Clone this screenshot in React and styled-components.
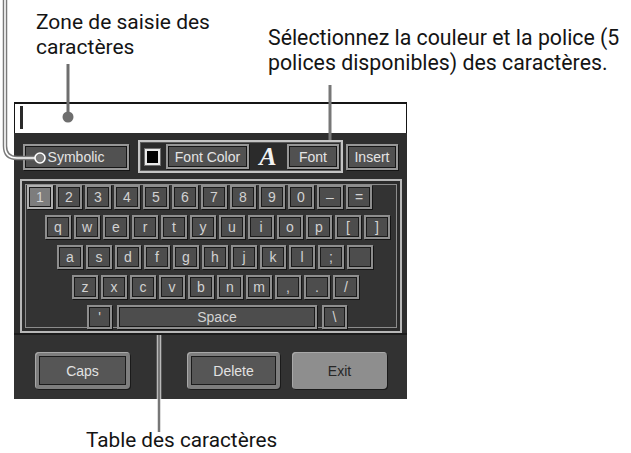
import React from 'react';
import styled, { createGlobalStyle } from 'styled-components';

const GlobalStyle = createGlobalStyle`
  html, body {
    margin: 0;
    padding: 0;
    background: #fff;
  }
  body {
    font-family: Roboto, "Open Sans", sans-serif;
  }
`;

const Page = styled.div`
  position: relative;
  width: 631px;
  height: 453px;
  overflow: hidden;
  background: #fff;
`;

const Header = styled.div`
  display: flex;
  height: 102px;
  padding-left: 36px;
  box-sizing: border-box;
`;

const Caption = styled.div`
  font-family: Roboto, "Open Sans", sans-serif;
  font-size: ${p => p.$size || 21}px;
  color: #141414;
  white-space: nowrap;
  width: ${p => (p.$width ? `${p.$width}px` : 'auto')};
  margin-top: ${p => p.$top || 0}px;
  margin-left: ${p => p.$left || 0}px;
  display: flex;
  flex-direction: column;
`;

const CaptionLine = styled.span`
  display: block;
  height: 25px;
  line-height: 25px;
`;

const Device = styled.div`
  margin-left: 14px;
  width: 393px;
  display: flex;
  flex-direction: column;
`;

const InputField = styled.div`
  height: 31px;
  box-sizing: border-box;
  background: #fff;
  border: 1px solid #151515;
  border-top-width: 2px;
  border-bottom: none;
  padding: 2px 0 0 5px;
`;

const Cursor = styled.div`
  width: 3px;
  height: 23px;
  background: #2a2a2a;
`;

const Panel = styled.div`
  background: #2e2e2e;
  display: flex;
  flex-direction: column;
`;

const Toolbar = styled.div`
  display: flex;
  align-items: center;
  height: 33px;
  margin-top: 7px;
  padding: 0 9px;
`;

const ToolButton = styled.div`
  width: ${p => p.$w}px;
  height: ${p => p.$h || 26}px;
  box-sizing: border-box;
  display: flex;
  align-items: center;
  justify-content: center;
  background: #515151;
  border: 2px solid #979797;
  box-shadow: inset 0 0 0 1px #161616, 1px 1px 0 #151515;
  color: #e4e4e4;
  font-family: "Liberation Sans", Arial, sans-serif;
  font-size: 14px;
  margin-left: ${p => p.$ml || 0}px;
`;

const FontGroup = styled.div`
  width: 205px;
  height: 33px;
  box-sizing: border-box;
  margin-left: 9px;
  display: flex;
  align-items: center;
  gap: 6px;
  padding-left: 5px;
  border: 2px solid #c4c4c4;
  box-shadow: inset 0 0 0 1px #5a5a5a;
  background: #2b2b2b;
`;

const ColorSwatch = styled.div`
  width: 15px;
  height: 16px;
  box-sizing: border-box;
  background: #000;
  border: 2px solid #e8e8e8;
  box-shadow: 0 0 0 1px #707070;
`;

const FontGlyph = styled.span`
  width: 26px;
  text-align: center;
  font-family: "Liberation Serif", "Times New Roman", serif;
  font-style: italic;
  font-weight: bold;
  font-size: 26px;
  line-height: 26px;
  color: #f2f2f2;
`;

const KeyFrame = styled.div`
  margin: 6px 5px 0 6px;
  height: 154px;
  box-sizing: border-box;
  border: 2px solid #b8b8b8;
  box-shadow: inset 0 0 0 3px #2b2b2b, inset 0 0 0 4px #8c8c8c;
  background: #333;
  padding-top: 4px;
  display: flex;
  flex-direction: column;
  gap: 6px;
`;

const KeyRow = styled.div`
  display: flex;
  height: 24px;
  gap: ${p => p.$gap || 3}px;
  padding-left: ${p => p.$indent}px;
`;

const Key = styled.div`
  width: ${p => p.$w || 26}px;
  height: 24px;
  box-sizing: border-box;
  display: flex;
  align-items: center;
  justify-content: center;
  background: ${p => (p.$active ? '#7d7d7d' : '#4d4d4d')};
  border: 2px solid ${p => (p.$active ? '#b0b0b0' : '#8e8e8e')};
  box-shadow: inset 0 0 0 1px #1a1a1a, 1px 1px 0 #141414;
  color: #d2d2d2;
  font-family: "Liberation Sans", Arial, sans-serif;
  font-size: 14px;
  line-height: 1;
`;

const BottomBar = styled.div`
  display: flex;
  border-top: 2px solid #1c1c1c;
  background: #323232;
  padding: 17px 20px 10px 21px;
`;

const BigButton = styled.div`
  width: ${p => p.$w}px;
  height: 37px;
  box-sizing: border-box;
  margin-left: ${p => p.$ml || 0}px;
  border-radius: 4px;
  padding: ${p => (p.$light ? 0 : 4)}px;
  background: ${p => (p.$light ? '#8e8e8e' : '#7e7e7e')};
  box-shadow: inset 1px 1px 0 #a8a8a8, 1px 1px 0 #1a1a1a;
  display: flex;
`;

const BigButtonFace = styled.div`
  flex: 1;
  display: flex;
  align-items: center;
  justify-content: center;
  background: ${p => (p.$light ? 'transparent' : '#565656')};
  border: ${p => (p.$light ? 'none' : '1px solid #1b1b1b')};
  color: ${p => (p.$light ? '#262626' : '#e2e2e2')};
  font-family: "Liberation Sans", Arial, sans-serif;
  font-size: 14px;
`;

const Leaders = styled.svg`
  position: absolute;
  left: 0;
  top: 0;
  pointer-events: none;
`;

const rows = [
  { indent: 5, keys: ['1', '2', '3', '4', '5', '6', '7', '8', '9', '0', '–', '='] },
  { indent: 23, keys: ['q', 'w', 'e', 'r', 't', 'y', 'u', 'i', 'o', 'p', '[', ']'] },
  { indent: 35, keys: ['a', 's', 'd', 'f', 'g', 'h', 'j', 'k', 'l', ';', ''] },
  { indent: 50, keys: ['z', 'x', 'c', 'v', 'b', 'n', 'm', ',', '.', '/'] },
];

const App = () => {
  return (
    <Page>
      <GlobalStyle />
      <Header>
        <Caption $width={232} $top={10.3}>
          <CaptionLine>Zone de saisie des</CaptionLine>
          <CaptionLine>caractères</CaptionLine>
        </Caption>
        <Caption $top={25.2} $size={21.3}>
          <CaptionLine>Sélectionnez la couleur et la police (5</CaptionLine>
          <CaptionLine>polices disponibles) des caractères.</CaptionLine>
        </Caption>
      </Header>

      <Device>
        <InputField>
          <Cursor />
        </InputField>
        <Panel>
          <Toolbar>
            <ToolButton $w={106}>Symbolic</ToolButton>
            <FontGroup>
              <ColorSwatch />
              <ToolButton $w={83} $h={25}>Font Color</ToolButton>
              <FontGlyph>A</FontGlyph>
              <ToolButton $w={52} $h={25}>Font</ToolButton>
            </FontGroup>
            <ToolButton $w={52} $ml={3}>Insert</ToolButton>
          </Toolbar>

          <KeyFrame>
            {rows.map((row, i) => (
              <KeyRow key={i} $indent={row.indent}>
                {row.keys.map((k, j) => (
                  <Key key={j} $active={i === 0 && j === 0}>{k}</Key>
                ))}
              </KeyRow>
            ))}
            <KeyRow $indent={65} $gap={5}>
              <Key $w={25}>'</Key>
              <Key $w={200}>Space</Key>
              <Key $w={25}>\</Key>
            </KeyRow>
          </KeyFrame>

          <BottomBar>
            <BigButton $w={95}><BigButtonFace>Caps</BigButtonFace></BigButton>
            <BigButton $w={93} $ml={57}><BigButtonFace>Delete</BigButtonFace></BigButton>
            <BigButton $w={95} $ml={12} $light><BigButtonFace $light>Exit</BigButtonFace></BigButton>
          </BottomBar>
        </Panel>
      </Device>

      <Caption $top={29.4} $left={86} $size={20.76}>
        <CaptionLine>Table des caractères</CaptionLine>
      </Caption>

      <Leaders width="631" height="453" viewBox="0 0 631 453">
        <path d="M5 0 V146 Q5 158 17 158 H35" fill="none" stroke="#7a7a7a" strokeWidth="4.5" />
        <path d="M5 0 V146 Q5 158 17 158 H35" fill="none" stroke="#ffffff" strokeWidth="1.6" />
        <circle cx="40" cy="158" r="5" fill="#7a7a7a" stroke="#ffffff" strokeWidth="1.6" />
        <line x1="68" y1="64" x2="68" y2="117" stroke="#6e6e6e" strokeWidth="3" />
        <circle cx="68" cy="117" r="5.5" fill="#6e6e6e" />
        <line x1="330" y1="85" x2="330" y2="140" stroke="#777" strokeWidth="3" />
        <line x1="159" y1="335" x2="159" y2="399" stroke="#d0d0d0" strokeWidth="4.5" />
        <line x1="159" y1="335" x2="159" y2="432" stroke="#777" strokeWidth="2.5" />
      </Leaders>
    </Page>
  );
};

export default App;
